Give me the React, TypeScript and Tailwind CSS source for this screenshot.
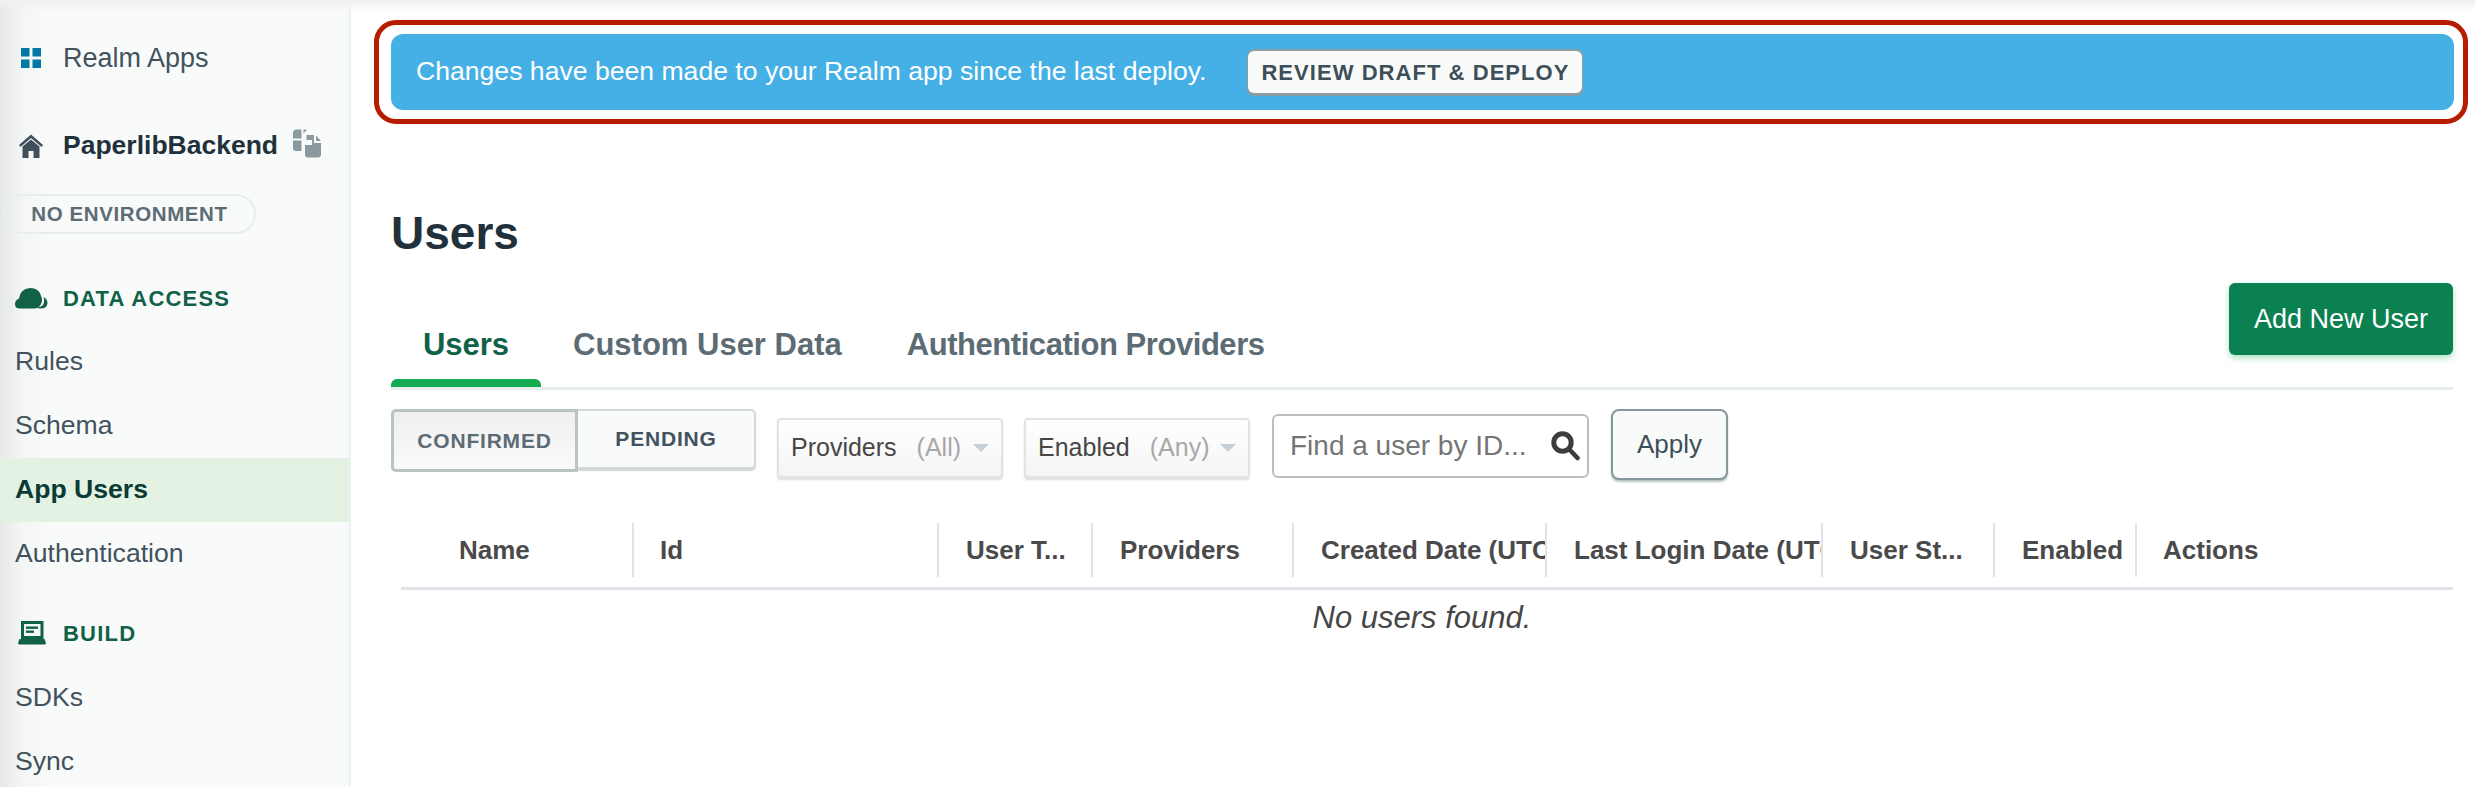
const sans = "font-['Liberation_Sans',Arial,sans-serif]";

const navTop = ["Rules", "Schema"];

function GridIcon() {
  return (
    <svg width="20" height="20" viewBox="0 0 20 20" fill="#0277a8">
      <rect x="0" y="0" width="8.5" height="8.5" />
      <rect x="11.5" y="0" width="8.5" height="8.5" />
      <rect x="0" y="11.5" width="8.5" height="8.5" />
      <rect x="11.5" y="11.5" width="8.5" height="8.5" />
    </svg>
  );
}

function HomeIcon() {
  return (
    <svg width="24" height="24" viewBox="0 0 24 24" fill="#3f505c">
      <path d="M12 0.5 L24 11 L22.5 13 L12 4 L1.5 13 L0 11 Z" />
      <path d="M3.5 12.5 L12 5.5 L20.5 12.5 V24 H14.5 V17 H9.5 V24 H3.5 Z" />
    </svg>
  );
}

function CopyIcon() {
  return (
    <svg width="29" height="29" viewBox="0 0 29 29" fill="#8b9a9f">
      <path d="M8.5 0.5 V9.5 H0 V4 Q0 0.5 3.5 0.5 Z" />
      <path d="M10.5 0.5 H14 L10.5 4.5 Z" />
      <path d="M0 11.5 H8.5 V22 H3 Q0 22 0 19 Z" />
      <path d="M13.5 6 H21 V14 H28 V25.5 Q28 28.5 25 28.5 H15 Q12 28.5 12 25.5 V16 L19 16 V11 L13.5 11 Z" />
      <path d="M23 6.5 L28 12 H23 Z" />
    </svg>
  );
}

function CloudIcon() {
  return (
    <svg width="33" height="21" viewBox="0 0 33 21" fill="#116149">
      <path d="M5 20.5 Q0 20.5 0 16 Q0 12 4 10.5 Q5 1 15 0 Q24 0 26 8 Q28 12 26 16 Q24 20.5 19 20.5 Z" />
      <path d="M28.5 9 Q32.5 11 32.5 15 Q32.5 20.5 25 20.5 Q22 20.5 22 19.5 Q28 19 29 14.5 Q29.5 11.5 28.5 9 Z" />
    </svg>
  );
}

function LaptopIcon() {
  return (
    <svg width="28" height="24" viewBox="0 0 28 24" fill="#116149">
      <path fillRule="evenodd" d="M3 0 H25.5 V18 H3 Z M6 3 V15 H22.5 V3 Z" />
      <path d="M1.5 18 H26.5 L28 22 Q28 23.5 26.5 23.5 H1.5 Q0 23.5 0 22 Z" />
      <rect x="8" y="5.5" width="12" height="2.4" />
      <rect x="8" y="9.5" width="8" height="2.4" />
    </svg>
  );
}

function SearchIcon() {
  return (
    <svg width="29" height="30" viewBox="0 0 29 30" fill="none" stroke="#3d3d3d">
      <circle cx="11.5" cy="11.5" r="8.7" strokeWidth="5" />
      <path d="M18.5 18.5 L26.5 27" strokeWidth="4.6" strokeLinecap="round" />
    </svg>
  );
}

function Caret() {
  return <span className="ml-auto h-0 w-0 border-x-[8px] border-t-[8px] border-x-transparent border-t-[#c6d0d6]" />;
}

function SectionHead({ icon, label, className }: { icon: React.ReactNode; label: string; className: string }) {
  return (
    <div className={`flex items-center ${className}`}>
      <span className="flex w-[63px] justify-center px-[11px]">{icon}</span>
      <span className="text-[22px] font-bold tracking-[1.2px] text-[#116149]">{label}</span>
    </div>
  );
}

function Sidebar() {
  return (
    <aside className="h-full w-[351px] shrink-0 border-r-2 border-[#edf0f0] bg-[linear-gradient(90deg,#e6e8e8_0px,#f4f6f6_22px,#f9fbfa_50px)] pt-[36px]">
      <div className="flex h-[44px] items-center">
        <span className="flex w-[63px] justify-center pr-[2px]"><GridIcon /></span>
        <span className="text-[27px] text-[#42525e]">Realm Apps</span>
      </div>
      <div className="mt-[44px] flex h-[44px] items-center">
        <span className="flex w-[63px] justify-center pr-[2px]"><HomeIcon /></span>
        <span className="text-[26.5px] font-bold text-[#21313c]">PaperlibBackend</span>
        <span className="ml-[15px] mt-[-6px]"><CopyIcon /></span>
      </div>
      <div className="ml-[3px] mt-[26px] flex h-[40px] w-[253px] items-center justify-center rounded-full border-2 border-[#e7eeec] text-[20.5px] font-bold tracking-[0.6px] text-[#5d6c74]">
        NO ENVIRONMENT
      </div>
      <SectionHead className="mt-[42px] h-[44px]" icon={<CloudIcon />} label="DATA ACCESS" />
      <div className="mt-[10px] flex flex-col text-[26.6px] text-[#42525e]">
        {navTop.map((item) => (
          <div key={item} className="flex h-[64px] items-center pl-[15px]">{item}</div>
        ))}
        <div className="flex h-[64px] items-center bg-[#e4f2e4] pl-[15px] font-bold text-[#0b3b35]">App Users</div>
        <div className="flex h-[64px] items-center pl-[15px]">Authentication</div>
      </div>
      <SectionHead className="mt-[25px] h-[44px]" icon={<LaptopIcon />} label="BUILD" />
      <div className="mt-[11px] flex flex-col text-[26.6px] text-[#42525e]">
        <div className="flex h-[64px] items-center pl-[15px]">SDKs</div>
        <div className="flex h-[64px] items-center pl-[15px]">Sync</div>
      </div>
    </aside>
  );
}

const columns = [
  { label: "Name", w: "w-[233px]", pl: "pl-[58px]" },
  { label: "Id", w: "w-[305px]", pl: "pl-[26px]" },
  { label: "User T...", w: "w-[154px]", pl: "pl-[27px]" },
  { label: "Providers", w: "w-[201px]", pl: "pl-[27px]" },
  { label: "Created Date (UTC)", w: "w-[253px]", pl: "pl-[27px]" },
  { label: "Last Login Date (UTC)", w: "w-[276px]", pl: "pl-[27px]" },
  { label: "User St...", w: "w-[172px]", pl: "pl-[27px]" },
  { label: "Enabled", w: "w-[142px]", pl: "pl-[27px]" },
  { label: "Actions", w: "flex-1", pl: "pl-[26px]" },
];

function Users() {
  return (
    <div className="pl-[40px] pr-[22px]">
      <h1 className="mt-[84px] text-[46px] font-bold leading-[50px] text-[#21313c]">Users</h1>

      <div className="relative mt-[27px] flex h-[105px] items-end border-b-[3px] border-[#e7eeec]">
        <div className="flex h-[105px] w-[150px] items-center justify-center border-b-[8px] border-transparent pt-[30px] text-[31px] font-bold text-[#116149]">
          Users
        </div>
        <div className="ml-[32px] flex h-[105px] items-center pt-[22px] text-[31px] font-bold text-[#5d6c74]">Custom User Data</div>
        <div className="ml-[65px] flex h-[105px] items-center pt-[22px] text-[31px] font-bold tracking-[-0.45px] text-[#5d6c74]">Authentication Providers</div>
        <div className="absolute bottom-[-3px] left-0 h-[11px] w-[150px] rounded-t-[6px] border-b-[3px] border-[#e7eeec] bg-[#13aa52]" />
        <button className="absolute right-0 top-[-2px] flex h-[72px] w-[224px] items-center justify-center rounded-[6px] bg-[#0b8050] text-[27px] text-white shadow-[0_3px_6px_rgba(19,170,82,0.35)]">
          Add New User
        </button>
      </div>

      <div className="mt-[11px] flex items-center">
        <div className="flex">
          <div className="flex h-[63px] w-[187px] items-center justify-center rounded-l-[5px] border-[3px] border-[#b8c4c2] bg-gradient-to-b from-[#efefef] to-[#fafafa] text-[21px] font-bold tracking-[0.8px] text-[#5d6c74]">
            CONFIRMED
          </div>
          <div className="flex h-[60px] w-[178px] items-center justify-center rounded-r-[5px] border-[2px] border-l-0 border-[#d3dbd9] bg-[#f9fbfa] text-[21px] font-bold tracking-[0.8px] text-[#42525e] shadow-[0_2px_1px_#d0d8d6]">
            PENDING
          </div>
        </div>
        <div className="ml-[21px] mt-[14px] flex h-[60px] w-[226px] items-center rounded-[4px] border-2 border-[#e3e3e3] bg-gradient-to-b from-white to-[#f5f5f5] px-[12px] text-[25px] text-[#464646] shadow-[0_2px_2px_#dcdcdc]">
          Providers<span className="ml-[20px] text-[#a7a7a7]">(All)</span><Caret />
        </div>
        <div className="ml-[21px] mt-[14px] flex h-[60px] w-[226px] items-center rounded-[4px] border-2 border-[#e3e3e3] bg-gradient-to-b from-white to-[#f5f5f5] px-[12px] text-[25px] text-[#464646] shadow-[0_2px_2px_#dcdcdc]">
          Enabled<span className="ml-[20px] text-[#a7a7a7]">(Any)</span><Caret />
        </div>
        <div className="ml-[22px] mt-[10px] flex h-[64px] w-[317px] items-center rounded-[6px] border-2 border-[#bdbdbd] bg-white pl-[16px] pr-[7px] text-[28px] text-[#757575]">
          Find a user by ID...<span className="ml-auto"><SearchIcon /></span>
        </div>
        <button className="ml-[22px] mt-[8px] flex h-[71px] w-[117px] items-center justify-center rounded-[8px] border-2 border-[#87979c] bg-[#f9fbfa] text-[26px] text-[#3d4f58] shadow-[0_2px_2px_#b8c4c2]">
          Apply
        </button>
      </div>

      <div className="ml-[10px] mt-[43px] border-b-[3px] border-[#e2e2e8] pb-[10px] pr-[10px]">
        <div className="flex h-[54px] items-center">
          {columns.map((c, i) => (
            <div
              key={c.label}
              className={`flex h-full items-center overflow-hidden whitespace-nowrap ${c.w} ${c.pl} ${i < columns.length - 1 ? "border-r-2 border-[#e2e2e8]" : ""} text-[26px] font-bold text-[#4a4a4a]`}
            >
              {c.label}
            </div>
          ))}
        </div>
      </div>
      <div className="mt-[11px] text-center text-[31px] italic leading-[34px] text-[#464646]">No users found.</div>
    </div>
  );
}

export default function App() {
  return (
    <div className={`relative flex h-[787px] w-[2475px] overflow-hidden bg-white ${sans}`}>
      <div className="absolute inset-x-0 top-0 z-10 h-[12px] bg-gradient-to-b from-[#eef0f2] to-transparent" />
      <Sidebar />
      <main className="min-w-0 flex-1 pt-[20px]">
        <div className="ml-[23px] mr-[7px] rounded-[22px] border-[5px] border-[#b71c00] p-[9px] pl-[12px]">
          <div className="flex h-[76px] items-center rounded-[12px] bg-[#45b0e6] pl-[25px] text-[26.6px] text-white">
            Changes have been made to your Realm app since the last deploy.
            <button className="ml-[42px] flex h-[42px] w-[334px] items-center justify-center rounded-[6px] bg-[#f9fbfa] text-[22px] font-bold tracking-[1.05px] text-[#3d4f58] shadow-[0_-1px_0_1px_#8f9ca0,0_2px_1px_1px_#8f9ca0]">
              REVIEW DRAFT &amp; DEPLOY
            </button>
          </div>
        </div>
        <Users />
      </main>
    </div>
  );
}
